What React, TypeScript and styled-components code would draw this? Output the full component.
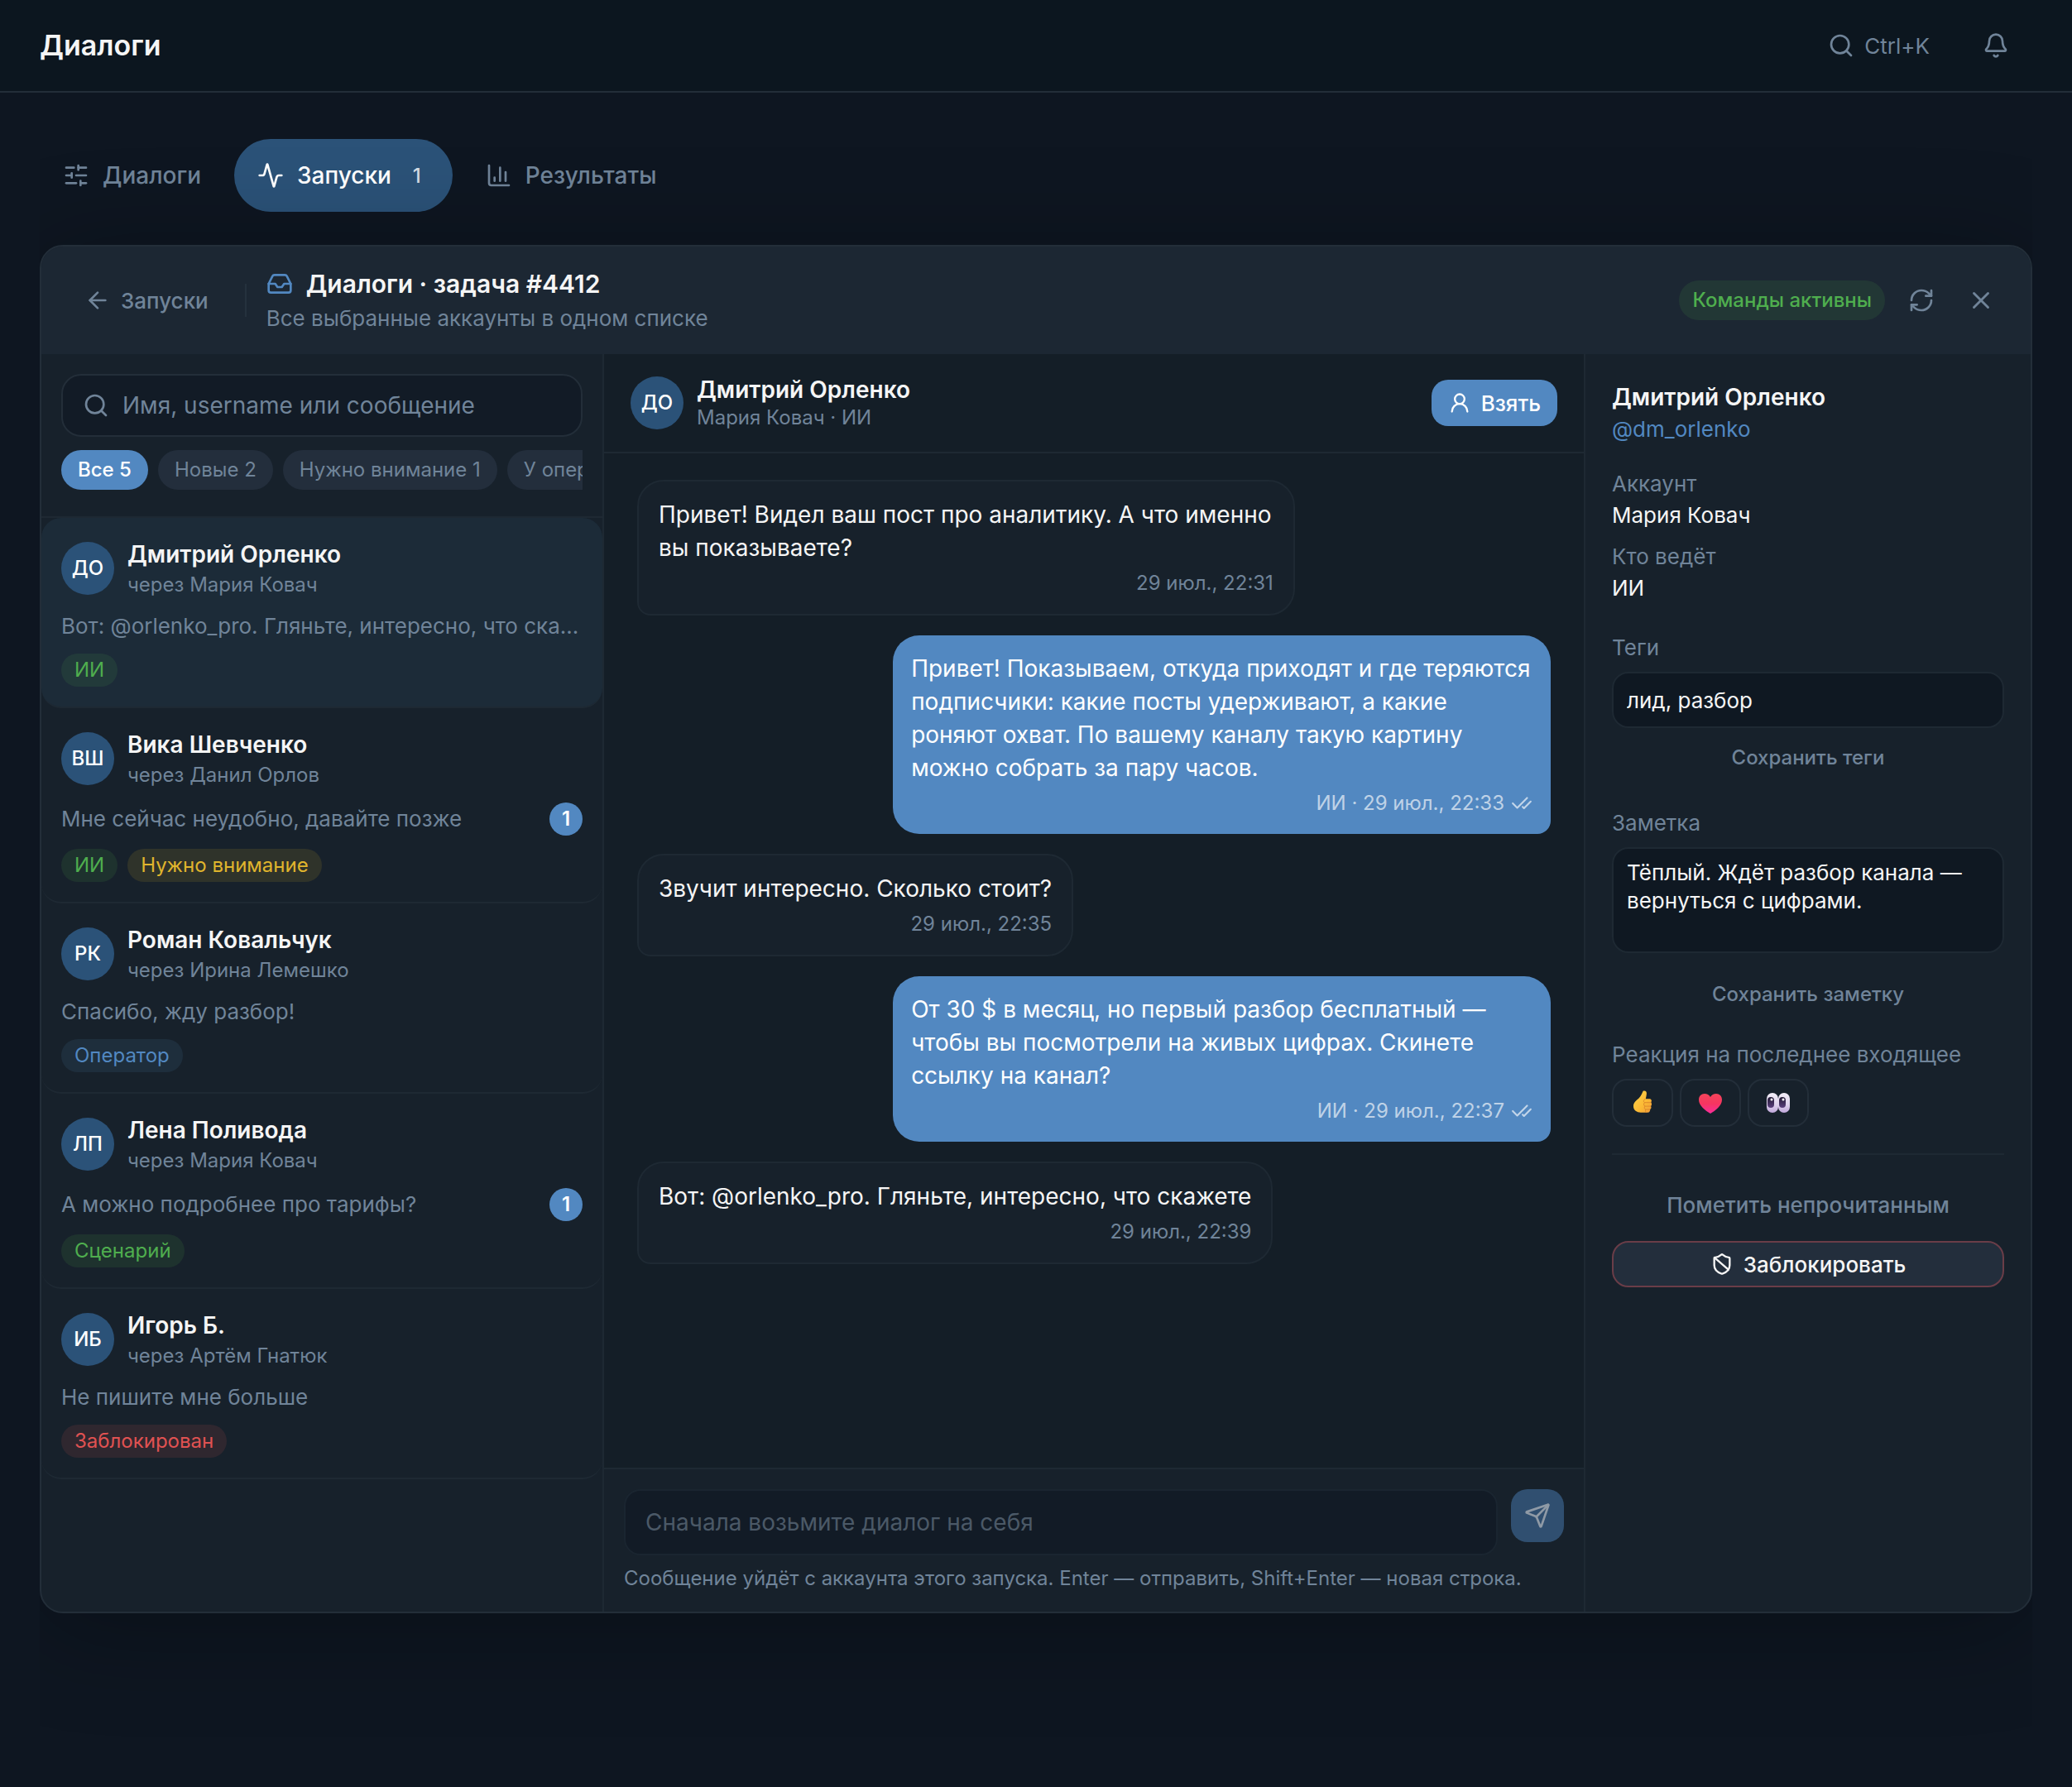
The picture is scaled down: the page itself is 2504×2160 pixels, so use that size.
import React, { useState } from 'react';
import styled, { createGlobalStyle, css } from 'styled-components';
import {
  Activity,
  ArrowLeft,
  Bell,
  ChartColumn,
  CheckCheck,
  Inbox,
  RefreshCw,
  Search,
  Send,
  ShieldBan,
  SlidersHorizontal,
  UserRound,
  X,
} from 'lucide-react';

const c = {
  page: '#0e1621',
  topbar: '#0c161f',
  panel: '#17212b',
  panelHead: '#1c2733',
  thread: '#141e27',
  field: '#121b26',
  fieldDeep: '#0f1822',
  raised: '#232e3c',
  line: '#1e2933',
  lineStrong: '#232e39',
  selected: '#1c2b38',
  text: '#f5f5f5',
  muted: '#708499',
  accent: '#5288c1',
  accentDeep: '#2b5278',
  green: '#4fae4e',
  yellow: '#e0b52d',
  red: '#e05252',
};

const GlobalStyle = createGlobalStyle`
  *, *::before, *::after { box-sizing: border-box; }
  body {
    margin: 0;
    background: ${c.page};
    color: ${c.text};
    font-family: Inter, "Noto Sans", sans-serif;
    font-size: 26px;
  }
  button, input, textarea { font: inherit; color: inherit; margin: 0; }
  button { border: 0; background: none; padding: 0; cursor: pointer; }
  h1, h2, h3, p, dl, dd, dt, ul { margin: 0; padding: 0; }
  ul { list-style: none; }
  svg { flex: none; display: block; }
`;

const Page = styled.div`
  min-height: 100vh;
  display: flex;
  flex-direction: column;
`;

const TopBar = styled.header`
  height: 112px;
  padding: 0 48px;
  display: flex;
  align-items: center;
  justify-content: space-between;
  background: ${c.topbar};
  border-bottom: 2px solid ${c.lineStrong};
`;

const PageTitle = styled.h1`
  font-size: 34px;
  line-height: 44px;
  font-weight: 600;
`;

const TopActions = styled.div`
  display: flex;
  gap: 8px;
`;

const TopButton = styled.button`
  display: flex;
  align-items: center;
  gap: 12px;
  height: 64px;
  padding: 0 28px;
  color: ${c.muted};
  font-size: 26px;
`;

const Main = styled.main`
  flex: 1;
  display: flex;
  flex-direction: column;
  gap: 40px;
  padding: 56px 48px 210px;
`;

const Tabs = styled.nav`
  display: flex;
  gap: 12px;
`;

const Tab = styled.button<{ $active?: boolean }>`
  display: flex;
  align-items: center;
  gap: 16px;
  height: 88px;
  padding: 0 28px;
  border-radius: 44px;
  font-size: 28px;
  font-weight: 500;
  color: ${p => (p.$active ? '#ffffff' : c.muted)};
  background: ${p => (p.$active ? c.accentDeep : 'transparent')};
`;

const TabCount = styled.span`
  padding: 0 10px;
  font-size: 24px;
  font-weight: 500;
  color: #d3dce5;
`;

const Panel = styled.section`
  flex: 1;
  display: flex;
  flex-direction: column;
  overflow: hidden;
  background: ${c.panel};
  border: 2px solid ${c.lineStrong};
  border-radius: 28px;
  box-shadow: 0 16px 128px rgba(0, 0, 0, 0.3);
  clip-path: inset(-128px 0 -160px 0);
`;

const PanelHead = styled.header`
  display: flex;
  align-items: center;
  height: 130px;
  padding: 0 28px;
  background: ${c.panelHead};
`;

const BackButton = styled.button`
  display: flex;
  align-items: center;
  gap: 12px;
  height: 64px;
  padding: 0 24px;
  font-size: 26px;
  font-weight: 500;
  color: ${c.muted};
`;

const Rule = styled.span`
  width: 2px;
  height: 40px;
  margin: 0 24px 0 20px;
  background: #25313d;
`;

const HeadText = styled.div`
  flex: 1;
  min-width: 0;
`;

const PanelTitle = styled.h2`
  display: flex;
  align-items: center;
  gap: 16px;
  font-size: 30px;
  line-height: 44px;
  font-weight: 600;
  svg { color: ${c.accent}; }
`;

const PanelSubtitle = styled.p`
  font-size: 26px;
  line-height: 40px;
  color: ${c.muted};
`;

const StatusPill = styled.span`
  margin-right: 12px;
  padding: 0 16px;
  border-radius: 24px;
  font-size: 24px;
  line-height: 48px;
  font-weight: 500;
  color: ${c.green};
  background: rgba(79, 174, 78, 0.12);
`;

const HeadTools = styled.div`
  display: flex;
  gap: 8px;
`;

const IconButton = styled.button`
  display: grid;
  place-items: center;
  width: 64px;
  height: 64px;
  color: ${c.muted};
`;

const Columns = styled.div`
  flex: 1;
  display: grid;
  grid-template-columns: 680px minmax(0, 1fr) 540px;
`;

const ListColumn = styled.aside`
  display: flex;
  flex-direction: column;
  min-width: 0;
  border-right: 2px solid ${c.line};
`;

const ListTools = styled.div`
  display: flex;
  flex-direction: column;
  gap: 16px;
  padding: 24px 24px 32px;
  border-bottom: 2px solid ${c.line};
`;

const SearchBox = styled.label`
  display: flex;
  align-items: center;
  gap: 16px;
  height: 76px;
  padding: 0 24px;
  border: 2px solid ${c.lineStrong};
  border-radius: 24px;
  background: ${c.field};
  color: ${c.muted};
`;

const SearchInput = styled.input`
  flex: 1;
  min-width: 0;
  padding: 0;
  border: 0;
  outline: 0;
  background: none;
  font-size: 28px;
  line-height: 40px;
  color: ${c.text};
  &::placeholder { color: ${c.muted}; opacity: 1; }
`;

const Chips = styled.div`
  display: flex;
  gap: 12px;
  overflow: hidden;
`;

const Chip = styled.button<{ $active?: boolean }>`
  flex: none;
  padding: 0 20px;
  border-radius: 24px;
  font-size: 24px;
  line-height: 48px;
  font-weight: ${p => (p.$active ? 500 : 400)};
  color: ${p => (p.$active ? '#ffffff' : c.muted)};
  background: ${p => (p.$active ? c.accent : c.raised)};
`;

const Row = styled.button<{ $selected?: boolean }>`
  display: flex;
  flex-direction: column;
  gap: 16px;
  width: 100%;
  padding: 24px;
  text-align: left;
  border-bottom: 2px solid ${c.line};
  border-radius: 24px;
  background: ${p => (p.$selected ? c.selected : 'transparent')};
`;

const Person = styled.span`
  display: flex;
  align-items: center;
  gap: 16px;
`;

const Avatar = styled.span`
  flex: none;
  width: 64px;
  border-radius: 50%;
  background: ${c.accentDeep};
  color: #ffffff;
  font-size: 24px;
  line-height: 64px;
  font-weight: 500;
  text-align: center;
`;

const RowName = styled.span`
  display: block;
  font-size: 28px;
  line-height: 40px;
  font-weight: 600;
`;

const RowVia = styled.span`
  display: block;
  font-size: 24px;
  line-height: 34px;
  color: ${c.muted};
`;

const PreviewLine = styled.span`
  display: flex;
  align-items: center;
  justify-content: space-between;
  gap: 16px;
  width: 100%;
`;

const Preview = styled.span`
  min-width: 0;
  overflow: hidden;
  white-space: nowrap;
  text-overflow: ellipsis;
  font-size: 26px;
  line-height: 34px;
  color: ${c.muted};
`;

const Unread = styled.span`
  flex: none;
  min-width: 40px;
  border-radius: 20px;
  background: ${c.accent};
  color: #ffffff;
  font-size: 24px;
  line-height: 40px;
  font-weight: 600;
  text-align: center;
`;

const Tags = styled.span`
  display: flex;
  gap: 12px;
`;

type Tone = 'green' | 'yellow' | 'blue' | 'red';

const tones = {
  green: css`color: ${c.green}; background: rgba(79, 174, 78, 0.12);`,
  yellow: css`color: ${c.yellow}; background: rgba(224, 181, 45, 0.12);`,
  blue: css`color: ${c.accent}; background: rgba(82, 136, 193, 0.12);`,
  red: css`color: ${c.red}; background: rgba(224, 82, 82, 0.12);`,
};

const Tag = styled.span<{ $tone: Tone }>`
  padding: 0 16px;
  border-radius: 20px;
  font-size: 24px;
  line-height: 40px;
  ${p => tones[p.$tone]}
`;

const ThreadColumn = styled.section`
  display: flex;
  flex-direction: column;
  min-width: 0;
  background: ${c.thread};
`;

const ThreadHead = styled.header`
  display: flex;
  align-items: center;
  gap: 16px;
  height: 120px;
  padding: 0 32px;
  border-bottom: 2px solid ${c.line};
`;

const ThreadWho = styled.div`
  flex: 1;
  min-width: 0;
`;

const ThreadName = styled.h3`
  font-size: 28px;
  line-height: 36px;
  font-weight: 600;
`;

const ThreadMeta = styled.p`
  font-size: 24px;
  line-height: 32px;
  color: ${c.muted};
`;

const TakeButton = styled.button`
  display: flex;
  align-items: center;
  gap: 12px;
  height: 56px;
  padding: 0 20px;
  border-radius: 20px;
  background: ${c.accent};
  color: #ffffff;
  font-size: 26px;
  font-weight: 500;
`;

const Messages = styled.div`
  flex: 1;
  display: flex;
  flex-direction: column;
  align-items: flex-start;
  gap: 24px;
  padding: 32px 40px;
`;

const Bubble = styled.article<{ $out?: boolean }>`
  display: flex;
  flex-direction: column;
  gap: 6px;
  max-width: 72%;
  ${p =>
    p.$out
      ? css`
          align-self: flex-end;
          padding: 20px 22px;
          border-radius: 32px 32px 16px 32px;
          background: ${c.accent};
          color: #ffffff;
        `
      : css`
          padding: 20px 24px;
          border: 2px solid ${c.line};
          border-radius: 32px 32px 32px 16px;
          background: ${c.panel};
        `}
`;

const BubbleText = styled.p`
  font-size: 28px;
  line-height: 40px;
`;

const BubbleTime = styled.p<{ $out?: boolean }>`
  display: flex;
  align-items: center;
  justify-content: flex-end;
  gap: 8px;
  font-size: 24px;
  line-height: 34px;
  color: ${p => (p.$out ? 'rgba(255, 255, 255, 0.65)' : c.muted)};
`;

const Composer = styled.form`
  display: grid;
  grid-template-columns: minmax(0, 1fr) 64px;
  gap: 12px 16px;
  padding: 24px;
  border-top: 2px solid ${c.line};
  background: ${c.panel};
`;

const ComposerInput = styled.textarea`
  display: block;
  width: 100%;
  height: 80px;
  padding: 18px 24px;
  border: 2px solid #1a2530;
  border-radius: 20px;
  outline: 0;
  resize: none;
  background: ${c.field};
  font-size: 28px;
  line-height: 40px;
  &::placeholder { color: #4b5967; opacity: 1; }
`;

const SendButton = styled.button`
  display: grid;
  place-items: center;
  width: 64px;
  height: 64px;
  border-radius: 20px;
  background: #304f70;
  color: #8f9aa6;
`;

const Hint = styled.p`
  grid-column: 1 / -1;
  font-size: 24px;
  line-height: 32px;
  color: ${c.muted};
`;

const InfoColumn = styled.aside`
  min-width: 0;
  padding: 32px;
  border-left: 2px solid ${c.line};
`;

const InfoName = styled.h3`
  font-size: 28px;
  line-height: 40px;
  font-weight: 600;
`;

const Handle = styled.a`
  display: block;
  font-size: 26px;
  line-height: 38px;
  color: ${c.accent};
  text-decoration: none;
`;

const Facts = styled.dl`
  display: grid;
  gap: 12px;
  margin-top: 28px;
  line-height: 38px;
  dt { color: ${c.muted}; }
`;

const InfoSection = styled.section<{ $top: number }>`
  display: flex;
  flex-direction: column;
  margin-top: ${p => p.$top}px;
`;

const FieldLabel = styled.label`
  margin-bottom: 12px;
  line-height: 34px;
  color: ${c.muted};
`;

const fieldBox = css`
  display: block;
  width: 100%;
  border: 2px solid ${c.line};
  border-radius: 20px;
  outline: 0;
  background: ${c.fieldDeep};
  font-size: 26px;
`;

const TagsInput = styled.input`
  ${fieldBox}
  height: 68px;
  padding: 0 16px;
`;

const NoteInput = styled.textarea`
  ${fieldBox}
  height: 128px;
  margin-bottom: 14px;
  padding: 12px 16px;
  line-height: 34px;
  resize: none;
`;

const SaveButton = styled.button`
  margin-top: 8px;
  height: 54px;
  font-size: 24px;
  font-weight: 500;
  color: ${c.muted};
`;

const Reactions = styled.div`
  display: flex;
  gap: 8px;
`;

const Reaction = styled.button`
  display: grid;
  place-items: center;
  width: 74px;
  height: 58px;
  border: 2px solid ${c.lineStrong};
  border-radius: 18px;
`;

const Actions = styled.div`
  display: grid;
  gap: 16px;
  margin-top: 32px;
  padding-top: 32px;
  border-top: 2px solid ${c.line};
`;

const ActionButton = styled.button<{ $danger?: boolean }>`
  display: flex;
  align-items: center;
  justify-content: center;
  gap: 12px;
  height: 56px;
  border-radius: 20px;
  font-size: 26px;
  font-weight: 500;
  color: ${c.muted};
  ${p =>
    p.$danger &&
    css`
      border: 2px solid #6a3d48;
      background: ${c.raised};
      color: ${c.text};
    `}
`;

const ThumbIcon = () => (
  <svg width="32" height="32" viewBox="0 0 32 32" aria-hidden="true">
    <defs>
      <linearGradient id="thumb" x1="0" y1="0" x2="1" y2="1">
        <stop offset="0" stopColor="#ffd54a" />
        <stop offset="0.6" stopColor="#fbb934" />
        <stop offset="1" stopColor="#ee9a3a" />
      </linearGradient>
    </defs>
    <path
      d="M17.500 1.500c2.400-.4 3.700 1.300 3.400 3.700-.2 2.200-.7 4.200-1.100 6.100h4.600c2.400 0 3.300 2.800 1.700 4.200 1.400 1.200 1.300 3.400-.1 4.400 1 1.500.5 3.300-.9 4.100.4 2-.9 3.700-2.800 3.700h-8.500C9.200 27.700 5 25.200 5 20.300c0-3.900 2.300-6 4.800-8.200 2.900-2.500 4.900-5.400 6.400-9.400.3-.7.600-1.100 1.300-1.200z"
      fill="url(#thumb)"
    />
    <path
      d="M19 11.500c-1.800.8-2.400 3.300-.4 4.200-1.600 1.200-1.300 3.600.4 4.400-1.200 1.300-.8 3.300.8 4-.6 1.200-.3 2.600.7 3.500M18.600 15.700h7.400M19 20.100h6.800M19.800 24.100h5"
      fill="none"
      stroke="#dd8a2c"
      strokeWidth="1"
      strokeLinecap="round"
    />
  </svg>
);

const HeartIcon = () => (
  <svg width="32" height="32" viewBox="0 0 32 32" aria-hidden="true">
    <defs>
      <linearGradient id="heart" x1="0" y1="0" x2="0" y2="1">
        <stop offset="0" stopColor="#f4455a" />
        <stop offset="0.5" stopColor="#f73560" />
        <stop offset="1" stopColor="#f92d9c" />
      </linearGradient>
    </defs>
    <path
      d="M16 29C10 25.500 2 19.500 2 12.300 2 8 5 5 9 5c3 0 5.500 1.500 7 4 1.500-2.500 4-4 7-4 4 0 7 3 7 7.300C30 19.500 22 25.500 16 29z"
      fill="url(#heart)"
    />
  </svg>
);

const EyesIcon = () => (
  <svg width="32" height="32" viewBox="0 0 32 32" aria-hidden="true">
    <defs>
      <linearGradient id="eye" x1="0" y1="0" x2="0" y2="1">
        <stop offset="0" stopColor="#f3eef8" />
        <stop offset="0.6" stopColor="#ded2ec" />
        <stop offset="1" stopColor="#bfa6da" />
      </linearGradient>
      <linearGradient id="pupil" x1="0" y1="0" x2="0" y2="1">
        <stop offset="0" stopColor="#241b35" />
        <stop offset="1" stopColor="#5a3f7c" />
      </linearGradient>
    </defs>
    <rect x="2" y="4" width="14" height="24" rx="7" fill="url(#eye)" />
    <rect x="16" y="4" width="14" height="24" rx="7" fill="url(#eye)" />
    <rect x="3" y="9" width="8" height="13" rx="4" fill="url(#pupil)" />
    <rect x="17" y="9" width="8" height="13" rx="4" fill="url(#pupil)" />
    <circle cx="8" cy="12" r="1.500" fill="#ffffff" />
    <circle cx="22" cy="12" r="1.500" fill="#ffffff" />
  </svg>
);

interface Dialog {
  initials: string;
  name: string;
  via: string;
  preview: string;
  unread?: number;
  tags: { text: string; tone: Tone }[];
}

const dialogs: Dialog[] = [
  {
    initials: 'ДО',
    name: 'Дмитрий Орленко',
    via: 'через Мария Ковач',
    preview: 'Вот: @orlenko_pro. Гляньте, интересно, что скажете',
    tags: [{ text: 'ИИ', tone: 'green' }],
  },
  {
    initials: 'ВШ',
    name: 'Вика Шевченко',
    via: 'через Данил Орлов',
    preview: 'Мне сейчас неудобно, давайте позже',
    unread: 1,
    tags: [
      { text: 'ИИ', tone: 'green' },
      { text: 'Нужно внимание', tone: 'yellow' },
    ],
  },
  {
    initials: 'РК',
    name: 'Роман Ковальчук',
    via: 'через Ирина Лемешко',
    preview: 'Спасибо, жду разбор!',
    tags: [{ text: 'Оператор', tone: 'blue' }],
  },
  {
    initials: 'ЛП',
    name: 'Лена Поливода',
    via: 'через Мария Ковач',
    preview: 'А можно подробнее про тарифы?',
    unread: 1,
    tags: [{ text: 'Сценарий', tone: 'green' }],
  },
  {
    initials: 'ИБ',
    name: 'Игорь Б.',
    via: 'через Артём Гнатюк',
    preview: 'Не пишите мне больше',
    tags: [{ text: 'Заблокирован', tone: 'red' }],
  },
];

const messages = [
  { out: false, time: '29 июл., 22:31', text: 'Привет! Видел ваш пост про аналитику. А что именно вы показываете?' },
  {
    out: true,
    time: 'ИИ · 29 июл., 22:33',
    text: 'Привет! Показываем, откуда приходят и где теряются подписчики: какие посты удерживают, а какие роняют охват. По вашему каналу такую картину можно собрать за пару часов.',
  },
  { out: false, time: '29 июл., 22:35', text: 'Звучит интересно. Сколько стоит?' },
  {
    out: true,
    time: 'ИИ · 29 июл., 22:37',
    text: 'От 30 $ в месяц, но первый разбор бесплатный — чтобы вы посмотрели на живых цифрах. Скинете ссылку на канал?',
  },
  { out: false, time: '29 июл., 22:39', text: 'Вот: @orlenko_pro. Гляньте, интересно, что скажете' },
];

const filters = ['Все 5', 'Новые 2', 'Нужно внимание 1', 'У оператора 1'];

const reactions = [
  { label: 'Палец вверх', icon: <ThumbIcon /> },
  { label: 'Сердце', icon: <HeartIcon /> },
  { label: 'Глаза', icon: <EyesIcon /> },
];

export default function App() {
  const [selected, setSelected] = useState(0);
  const [filter, setFilter] = useState(0);

  return (
    <>
      <GlobalStyle />
      <Page>
        <TopBar>
          <PageTitle>Диалоги</PageTitle>
          <TopActions>
            <TopButton>
              <Search size={32} />
              Ctrl+K
            </TopButton>
            <TopButton aria-label="Уведомления">
              <Bell size={32} />
            </TopButton>
          </TopActions>
        </TopBar>
        <Main>
          <Tabs>
            <Tab>
              <SlidersHorizontal size={32} />
              Диалоги
            </Tab>
            <Tab $active>
              <Activity size={32} />
              Запуски
              <TabCount>1</TabCount>
            </Tab>
            <Tab>
              <ChartColumn size={32} />
              Результаты
            </Tab>
          </Tabs>
          <Panel>
            <PanelHead>
              <BackButton>
                <ArrowLeft size={32} />
                Запуски
              </BackButton>
              <Rule />
              <HeadText>
                <PanelTitle>
                  <Inbox size={32} />
                  Диалоги · задача #4412
                </PanelTitle>
                <PanelSubtitle>Все выбранные аккаунты в одном списке</PanelSubtitle>
              </HeadText>
              <StatusPill>Команды активны</StatusPill>
              <HeadTools>
                <IconButton aria-label="Обновить">
                  <RefreshCw size={32} />
                </IconButton>
                <IconButton aria-label="Закрыть">
                  <X size={34} />
                </IconButton>
              </HeadTools>
            </PanelHead>
            <Columns>
              <ListColumn>
                <ListTools>
                  <SearchBox>
                    <Search size={32} />
                    <SearchInput aria-label="Поиск" placeholder="Имя, username или сообщение" />
                  </SearchBox>
                  <Chips>
                    {filters.map((text, i) => (
                      <Chip key={text} $active={i === filter} onClick={() => setFilter(i)}>
                        {text}
                      </Chip>
                    ))}
                  </Chips>
                </ListTools>
                <ul>
                  {dialogs.map((d, i) => (
                    <li key={d.name}>
                      <Row $selected={i === selected} onClick={() => setSelected(i)}>
                        <Person>
                          <Avatar>{d.initials}</Avatar>
                          <span>
                            <RowName>{d.name}</RowName>
                            <RowVia>{d.via}</RowVia>
                          </span>
                        </Person>
                        <PreviewLine>
                          <Preview>{d.preview}</Preview>
                          {d.unread && <Unread>{d.unread}</Unread>}
                        </PreviewLine>
                        <Tags>
                          {d.tags.map(t => (
                            <Tag key={t.text} $tone={t.tone}>
                              {t.text}
                            </Tag>
                          ))}
                        </Tags>
                      </Row>
                    </li>
                  ))}
                </ul>
              </ListColumn>
              <ThreadColumn>
                <ThreadHead>
                  <Avatar>ДО</Avatar>
                  <ThreadWho>
                    <ThreadName>Дмитрий Орленко</ThreadName>
                    <ThreadMeta>Мария Ковач · ИИ</ThreadMeta>
                  </ThreadWho>
                  <TakeButton>
                    <UserRound size={28} />
                    Взять
                  </TakeButton>
                </ThreadHead>
                <Messages>
                  {messages.map(m => (
                    <Bubble key={m.time} $out={m.out}>
                      <BubbleText>{m.text}</BubbleText>
                      <BubbleTime $out={m.out}>
                        {m.time}
                        {m.out && <CheckCheck size={26} />}
                      </BubbleTime>
                    </Bubble>
                  ))}
                </Messages>
                <Composer onSubmit={e => e.preventDefault()}>
                  <ComposerInput aria-label="Сообщение" placeholder="Сначала возьмите диалог на себя" disabled />
                  <SendButton aria-label="Отправить" disabled>
                    <Send size={32} />
                  </SendButton>
                  <Hint>Сообщение уйдёт с аккаунта этого запуска. Enter — отправить, Shift+Enter — новая строка.</Hint>
                </Composer>
              </ThreadColumn>
              <InfoColumn>
                <InfoName>Дмитрий Орленко</InfoName>
                <Handle href="#dm_orlenko">@dm_orlenko</Handle>
                <Facts>
                  <div>
                    <dt>Аккаунт</dt>
                    <dd>Мария Ковач</dd>
                  </div>
                  <div>
                    <dt>Кто ведёт</dt>
                    <dd>ИИ</dd>
                  </div>
                </Facts>
                <InfoSection $top={36}>
                  <FieldLabel htmlFor="tags">Теги</FieldLabel>
                  <TagsInput id="tags" defaultValue="лид, разбор" />
                  <SaveButton>Сохранить теги</SaveButton>
                </InfoSection>
                <InfoSection $top={36}>
                  <FieldLabel htmlFor="note">Заметка</FieldLabel>
                  <NoteInput id="note" defaultValue="Тёплый. Ждёт разбор канала — вернуться с цифрами." />
                  <SaveButton>Сохранить заметку</SaveButton>
                </InfoSection>
                <InfoSection $top={30}>
                  <FieldLabel as="p">Реакция на последнее входящее</FieldLabel>
                  <Reactions>
                    {reactions.map(r => (
                      <Reaction key={r.label} aria-label={r.label}>
                        {r.icon}
                      </Reaction>
                    ))}
                  </Reactions>
                </InfoSection>
                <Actions>
                  <ActionButton>Пометить непрочитанным</ActionButton>
                  <ActionButton $danger>
                    <ShieldBan size={28} />
                    Заблокировать
                  </ActionButton>
                </Actions>
              </InfoColumn>
            </Columns>
          </Panel>
        </Main>
      </Page>
    </>
  );
}
